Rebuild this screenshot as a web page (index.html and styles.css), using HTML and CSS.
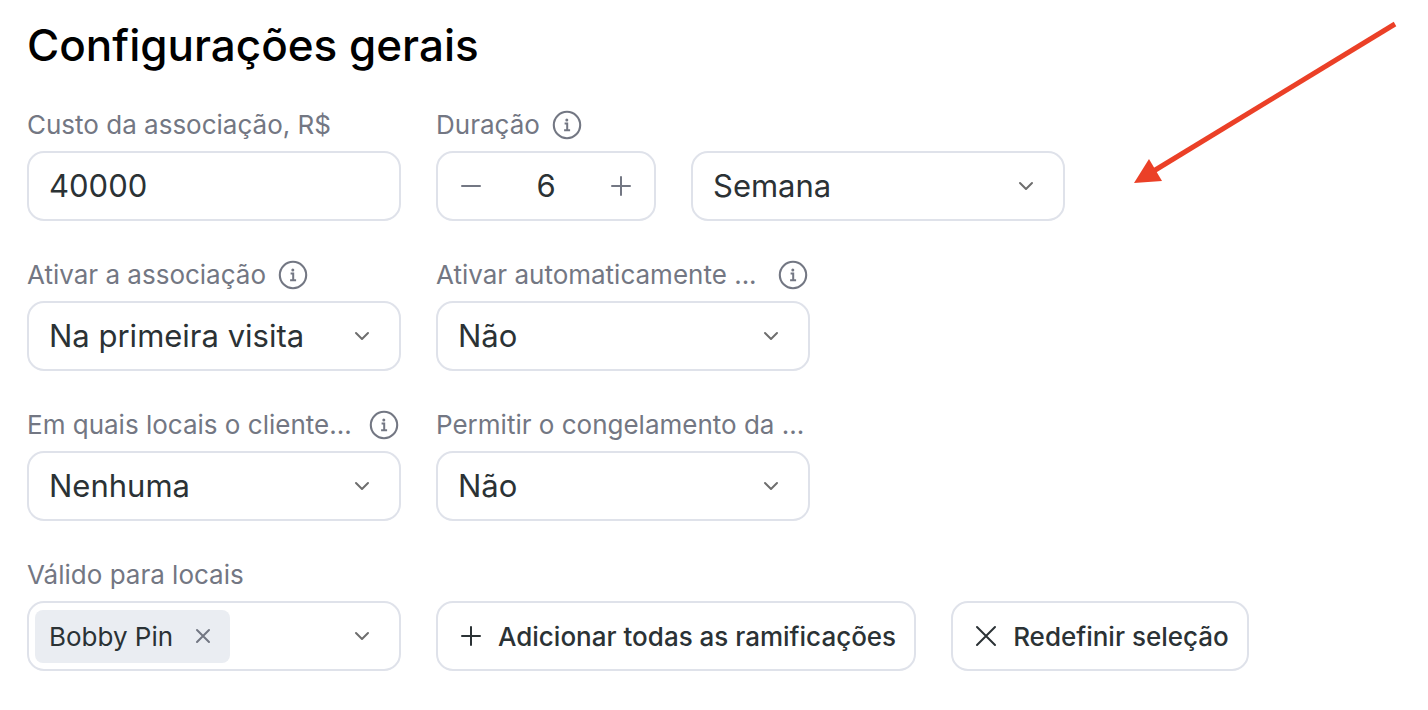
FILE: index.html
```html
<!DOCTYPE html>
<html lang="pt-BR">
<head>
    <meta charset="UTF-8">
    <meta name="viewport" content="width=device-width, initial-scale=1.0">
    <title>Configurações gerais</title>
    <link rel="stylesheet" href="styles.css">
</head>
<body>
    <!-- Shared icons -->
    <svg class="sprite" aria-hidden="true">
        <symbol id="icon-info" viewBox="0 0 30 30">
            <circle cx="15" cy="15" r="13.2" fill="none" stroke="currentColor" stroke-width="2.1"/>
            <circle cx="14.8" cy="10" r="1.5" fill="currentColor"/>
            <path d="M12.6 13.6h2.6v6.4M12.1 20.3h6" fill="none" stroke="currentColor" stroke-width="2"/>
        </symbol>
        <symbol id="icon-chevron" viewBox="0 0 16 16">
            <path d="M2 5l6 6 6-6" fill="none" stroke="currentColor" stroke-width="2" stroke-linecap="round" stroke-linejoin="round"/>
        </symbol>
        <symbol id="icon-minus" viewBox="0 0 22 22">
            <path d="M2 11h18" fill="none" stroke="currentColor" stroke-width="2" stroke-linecap="round"/>
        </symbol>
        <symbol id="icon-plus" viewBox="0 0 22 22">
            <path d="M2 11h18M11 2v18" fill="none" stroke="currentColor" stroke-width="2" stroke-linecap="round"/>
        </symbol>
        <symbol id="icon-cross" viewBox="0 0 22 22">
            <path d="M2 2l18 18M20 2L2 20" fill="none" stroke="currentColor" stroke-width="2" stroke-linecap="round"/>
        </symbol>
        <symbol id="icon-remove" viewBox="0 0 16 16">
            <path d="M2 2l12 12M14 2L2 14" fill="none" stroke="currentColor" stroke-width="2" stroke-linecap="round"/>
        </symbol>
    </svg>

    <main class="settings">
        <h1>Configurações gerais</h1>

        <div class="row">
            <div class="field">
                <div class="field-label"><label for="cost">Custo da associação, R$</label></div>
                <input class="control" type="text" id="cost" value="40000">
            </div>
            <div class="field field-small">
                <div class="field-label">
                    <label for="duration">Duração</label>
                    <svg class="info"><use href="#icon-info"/></svg>
                </div>
                <div class="control stepper">
                    <button type="button" aria-label="Diminuir"><svg class="icon"><use href="#icon-minus"/></svg></button>
                    <input type="text" id="duration" value="6">
                    <button type="button" aria-label="Aumentar"><svg class="icon"><use href="#icon-plus"/></svg></button>
                </div>
            </div>
            <div class="field">
                <div class="select-box">
                    <select class="control" id="unit" aria-label="Unidade">
                        <option>Semana</option>
                    </select>
                    <svg class="chevron"><use href="#icon-chevron"/></svg>
                </div>
            </div>
        </div>

        <div class="row">
            <div class="field">
                <div class="field-label">
                    <label for="activate">Ativar a associação</label>
                    <svg class="info"><use href="#icon-info"/></svg>
                </div>
                <div class="select-box">
                    <select class="control" id="activate">
                        <option>Na primeira visita</option>
                    </select>
                    <svg class="chevron"><use href="#icon-chevron"/></svg>
                </div>
            </div>
            <div class="field">
                <div class="field-label field-label-full">
                    <label for="auto">Ativar automaticamente ...</label>
                    <svg class="info"><use href="#icon-info"/></svg>
                </div>
                <div class="select-box">
                    <select class="control" id="auto">
                        <option>Não</option>
                    </select>
                    <svg class="chevron"><use href="#icon-chevron"/></svg>
                </div>
            </div>
        </div>

        <div class="row">
            <div class="field">
                <div class="field-label field-label-full">
                    <label for="places">Em quais locais o cliente...</label>
                    <svg class="info"><use href="#icon-info"/></svg>
                </div>
                <div class="select-box">
                    <select class="control" id="places">
                        <option>Nenhuma</option>
                    </select>
                    <svg class="chevron"><use href="#icon-chevron"/></svg>
                </div>
            </div>
            <div class="field">
                <div class="field-label"><label for="freeze">Permitir o congelamento da ...</label></div>
                <div class="select-box">
                    <select class="control" id="freeze">
                        <option>Não</option>
                    </select>
                    <svg class="chevron"><use href="#icon-chevron"/></svg>
                </div>
            </div>
        </div>

        <div class="row">
            <div class="field">
                <div class="field-label"><span id="valid-label">Válido para locais</span></div>
                <div class="control tags" role="group" aria-labelledby="valid-label">
                    <span class="tag">
                        Bobby Pin
                        <button type="button" aria-label="Remover"><svg class="icon-small"><use href="#icon-remove"/></svg></button>
                    </span>
                    <button type="button" aria-label="Abrir"><svg class="chevron"><use href="#icon-chevron"/></svg></button>
                </div>
            </div>
            <button type="button" class="control action"><svg class="icon"><use href="#icon-plus"/></svg>Adicionar todas as ramificações</button>
            <button type="button" class="control action"><svg class="icon"><use href="#icon-cross"/></svg>Redefinir seleção</button>
        </div>
    </main>

    <svg class="arrow" viewBox="0 0 264 164" aria-hidden="true">
        <path d="M261 4L18 152" stroke="#eb4027" stroke-width="5" fill="none"/>
        <path d="M0 163L15 139L28 161Z" fill="#eb4027"/>
    </svg>
</body>
</html>
```
FILE: styles.css
```css
* {
    box-sizing: border-box;
}

body {
    position: relative;
    margin: 0;
    background: #fff;
    color: #2b3235;
    font-family: Inter, 'Liberation Sans', sans-serif;
}

.sprite {
    display: none;
}

.settings {
    display: flex;
    flex-direction: column;
    gap: 38px;
    padding: 20px 27px 38px;
}

h1 {
    margin: 0;
    color: #000;
    font-size: 44px;
    font-weight: 500;
    line-height: 51px;
}

.row {
    display: flex;
    align-items: flex-end;
    gap: 35px;
}

.field {
    flex: 0 1 374px;
    min-width: 0;
}

.field-small {
    flex-basis: 220px;
}

/* Labels above the controls */
.field-label {
    display: flex;
    align-items: center;
    gap: 12px;
    height: 32px;
    margin-bottom: 10px;
    color: #737783;
    font-size: 26px;
    line-height: 32px;
    white-space: nowrap;
}

.field-label-full {
    justify-content: space-between;
    padding-right: 2px;
}

.info {
    flex: none;
    width: 30px;
    height: 30px;
}

/* Common box of inputs, selects and buttons */
.control {
    width: 100%;
    height: 70px;
    margin: 0;
    padding: 0 20px 2px;
    border: 2px solid #dfe2ea;
    border-radius: 17px;
    background: #fff;
    color: inherit;
    font-family: inherit;
    font-size: 31px;
}

.select-box {
    display: grid;
    align-items: center;
}

.select-box select,
.select-box .chevron {
    grid-area: 1 / 1;
}

.select-box select {
    appearance: none;
}

.select-box .chevron {
    justify-self: end;
    margin-right: 31px;
    pointer-events: none;
}

.chevron {
    display: block;
    width: 16px;
    height: 16px;
    color: #6e6e6e;
}

.icon {
    flex: none;
    width: 22px;
    height: 22px;
}

.icon-small {
    display: block;
    width: 16px;
    height: 16px;
}

/* Number stepper */
.stepper {
    display: flex;
    align-items: center;
    padding: 0 22px;
}

.stepper input {
    flex: 1;
    width: 0;
    padding: 0 0 2px;
    border: none;
    background: none;
    color: inherit;
    font: inherit;
    text-align: center;
}

.stepper button,
.tags button {
    display: flex;
    padding: 0;
    border: none;
    background: none;
    color: #737783;
    cursor: pointer;
}

/* Selected locations */
.tags {
    display: flex;
    align-items: center;
    justify-content: space-between;
    padding: 0 29px 0 6px;
}

.tag {
    display: flex;
    align-items: center;
    gap: 22px;
    height: 53px;
    padding: 0 19px 0 14px;
    border-radius: 8px;
    background: #eaedf2;
    font-size: 26px;
}

.action {
    display: flex;
    align-items: center;
    gap: 16px;
    width: auto;
    padding: 0 18px 0 22px;
    font-size: 26px;
    font-weight: 500;
    white-space: nowrap;
    cursor: pointer;
}

.arrow {
    position: absolute;
    top: 20px;
    right: 30px;
    width: 264px;
    height: 164px;
    pointer-events: none;
}
```
